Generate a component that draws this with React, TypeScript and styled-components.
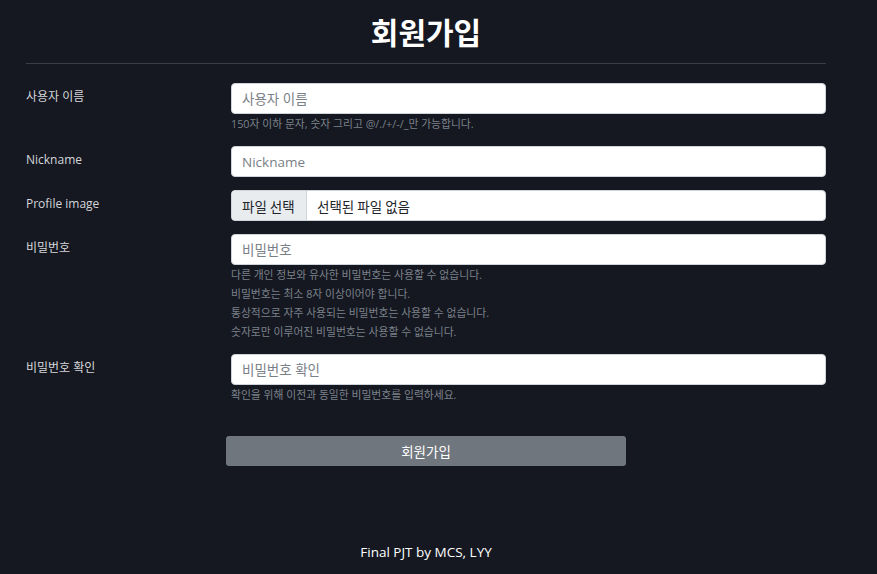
import React from "react";
import styled, { createGlobalStyle } from "styled-components";

const Global = createGlobalStyle`
  html, body { margin: 0; padding: 0; background: #151821; }
  body {
    font-family: "Open Sans", "Noto Sans CJK KR", sans-serif;
    color: #e6e6e6;
    width: 877px;
    height: 574px;
    overflow: hidden;
  }
  * { box-sizing: border-box; }
`;

const Page = styled.div`
  width: 877px;
  height: 574px;
  display: flex;
  flex-direction: column;
`;

const Main = styled.main`
  width: 800px;
  margin-left: 26px;
  display: flex;
  flex-direction: column;
`;

const Title = styled.h1`
  margin: 11px 0 0;
  font-family: "Noto Sans CJK KR", sans-serif;
  font-weight: 700;
  font-size: 30px;
  line-height: 40px;
  text-align: center;
  color: #ffffff;
`;

const Rule = styled.hr`
  margin: 12px 0 19px;
  border: 0;
  border-top: 1px solid #3b3e46;
`;

const Form = styled.form`
  display: flex;
  flex-direction: column;
  gap: 13px;
`;

const Row = styled.div`
  display: grid;
  grid-template-columns: 205px 1fr;
`;

const Label = styled.label`
  font-size: 12px;
  line-height: 18px;
  padding-top: 5px;
  color: #d4d6da;
`;

const Field = styled.div`
  display: flex;
  flex-direction: column;
`;

const Input = styled.input`
  height: 31px;
  width: 100%;
  border: 1px solid #ced4da;
  border-radius: 4px;
  background: #ffffff;
  padding: 0 10px;
  font-family: "Open Sans", "Noto Sans CJK KR", sans-serif;
  font-size: 13.5px;
  color: #212529;
  outline: none;
  &::placeholder { color: #7a8087; }
`;

const FileBox = styled.div`
  height: 31px;
  display: flex;
  align-items: stretch;
  border: 1px solid #ced4da;
  border-radius: 4px;
  background: #ffffff;
  overflow: hidden;
  font-family: "Noto Sans CJK KR", sans-serif;
  font-size: 13.5px;
`;

const FileButton = styled.span`
  display: flex;
  align-items: center;
  padding: 0 10px;
  width: 75px;
  background: #e9ecef;
  border-right: 1px solid #ced4da;
  color: #212529;
`;

const FileName = styled.span`
  display: flex;
  align-items: center;
  padding-left: 10px;
  color: #212529;
`;

const Help = styled.div`
  font-size: 10.8px;
  line-height: 19px;
  color: #7b8189;
`;

const Submit = styled.button`
  margin: 19px auto 0;
  width: 400px;
  height: 30px;
  border: 0;
  border-radius: 3px;
  background: #6f767d;
  color: #ffffff;
  font-family: "Noto Sans CJK KR", sans-serif;
  font-size: 13.5px;
`;

const Footer = styled.footer`
  margin-top: auto;
  width: 800px;
  margin-left: 26px;
  text-align: center;
  font-size: 13.5px;
  line-height: 20px;
  padding-bottom: 12px;
  color: #ffffff;
`;

export default function App() {
  return (
    <Page>
      <Global />
      <Main>
        <Title>회원가입</Title>
        <Rule />
        <Form onSubmit={(e) => e.preventDefault()}>
          <Row>
            <Label>사용자 이름</Label>
            <Field>
              <Input placeholder="사용자 이름" />
              <Help>150자 이하 문자, 숫자 그리고 @/./+/-/_만 가능합니다.</Help>
            </Field>
          </Row>
          <Row>
            <Label>Nickname</Label>
            <Field>
              <Input placeholder="Nickname" />
            </Field>
          </Row>
          <Row>
            <Label>Profile image</Label>
            <Field>
              <FileBox>
                <FileButton>파일 선택</FileButton>
                <FileName>선택된 파일 없음</FileName>
              </FileBox>
            </Field>
          </Row>
          <Row>
            <Label>비밀번호</Label>
            <Field>
              <Input type="password" placeholder="비밀번호" />
              <Help>
                다른 개인 정보와 유사한 비밀번호는 사용할 수 없습니다.
                <br />
                비밀번호는 최소 8자 이상이어야 합니다.
                <br />
                통상적으로 자주 사용되는 비밀번호는 사용할 수 없습니다.
                <br />
                숫자로만 이루어진 비밀번호는 사용할 수 없습니다.
              </Help>
            </Field>
          </Row>
          <Row>
            <Label>비밀번호 확인</Label>
            <Field>
              <Input type="password" placeholder="비밀번호 확인" />
              <Help>확인을 위해 이전과 동일한 비밀번호를 입력하세요.</Help>
            </Field>
          </Row>
          <Submit type="submit">회원가입</Submit>
        </Form>
      </Main>
      <Footer>Final PJT by MCS, LYY</Footer>
    </Page>
  );
}
